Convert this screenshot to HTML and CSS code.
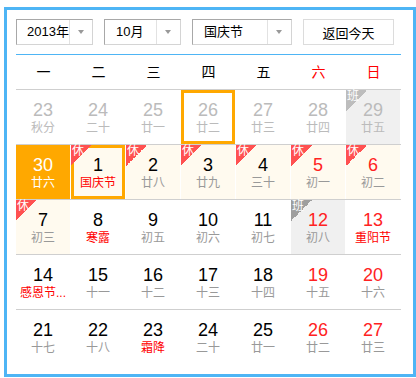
FILE: index.html
```html
<!DOCTYPE html>
<html lang="zh-CN">
<head>
  <meta charset="UTF-8">
  <title>万年历</title>
  <link rel="stylesheet" href="styles.css">
</head>
<body>
  <div class="calendar">
    <div class="toolbar">
      <div class="select year-select"><span class="value">2013年</span><span class="arrow"></span></div>
      <div class="select month-select"><span class="value">10月</span><span class="arrow"></span></div>
      <div class="select holiday-select"><span class="value">国庆节</span><span class="arrow"></span></div>
      <button class="today-btn">返回今天</button>
    </div>

    <div class="weekdays">
      <div>一</div><div>二</div><div>三</div><div>四</div><div>五</div>
      <div class="weekend">六</div><div class="weekend">日</div>
    </div>

    <div class="week">
      <div class="day other"><div class="num">23</div><div class="lunar">秋分</div></div>
      <div class="day other"><div class="num">24</div><div class="lunar">二十</div></div>
      <div class="day other"><div class="num">25</div><div class="lunar">廿一</div></div>
      <div class="day other selected"><div class="num">26</div><div class="lunar">廿二</div></div>
      <div class="day other"><div class="num">27</div><div class="lunar">廿三</div></div>
      <div class="day other"><div class="num">28</div><div class="lunar">廿四</div></div>
      <div class="day other workday"><span class="badge badge-work light">班</span><div class="num">29</div><div class="lunar">廿五</div></div>
    </div>

    <div class="week">
      <div class="day today"><div class="num">30</div><div class="lunar">廿六</div></div>
      <div class="day rest selected"><span class="badge">休</span><div class="num">1</div><div class="lunar fest">国庆节</div></div>
      <div class="day rest"><span class="badge">休</span><div class="num">2</div><div class="lunar">廿八</div></div>
      <div class="day rest"><span class="badge">休</span><div class="num">3</div><div class="lunar">廿九</div></div>
      <div class="day rest"><span class="badge">休</span><div class="num">4</div><div class="lunar">三十</div></div>
      <div class="day rest weekend"><span class="badge">休</span><div class="num">5</div><div class="lunar">初一</div></div>
      <div class="day rest weekend"><span class="badge">休</span><div class="num">6</div><div class="lunar">初二</div></div>
    </div>

    <div class="week">
      <div class="day rest"><span class="badge">休</span><div class="num">7</div><div class="lunar">初三</div></div>
      <div class="day"><div class="num">8</div><div class="lunar fest">寒露</div></div>
      <div class="day"><div class="num">9</div><div class="lunar">初五</div></div>
      <div class="day"><div class="num">10</div><div class="lunar">初六</div></div>
      <div class="day"><div class="num">11</div><div class="lunar">初七</div></div>
      <div class="day weekend workday"><span class="badge badge-work">班</span><div class="num">12</div><div class="lunar">初八</div></div>
      <div class="day weekend"><div class="num">13</div><div class="lunar fest">重阳节</div></div>
    </div>

    <div class="week">
      <div class="day"><div class="num">14</div><div class="lunar fest">感恩节...</div></div>
      <div class="day"><div class="num">15</div><div class="lunar">十一</div></div>
      <div class="day"><div class="num">16</div><div class="lunar">十二</div></div>
      <div class="day"><div class="num">17</div><div class="lunar">十三</div></div>
      <div class="day"><div class="num">18</div><div class="lunar">十四</div></div>
      <div class="day weekend"><div class="num">19</div><div class="lunar">十五</div></div>
      <div class="day weekend"><div class="num">20</div><div class="lunar">十六</div></div>
    </div>

    <div class="week">
      <div class="day"><div class="num">21</div><div class="lunar">十七</div></div>
      <div class="day"><div class="num">22</div><div class="lunar">十八</div></div>
      <div class="day"><div class="num">23</div><div class="lunar fest">霜降</div></div>
      <div class="day"><div class="num">24</div><div class="lunar">二十</div></div>
      <div class="day"><div class="num">25</div><div class="lunar">廿一</div></div>
      <div class="day weekend"><div class="num">26</div><div class="lunar">廿二</div></div>
      <div class="day weekend"><div class="num">27</div><div class="lunar">廿三</div></div>
    </div>
  </div>
</body>
</html>
```

FILE: styles.css
```css
body {
  margin: 0;
  background: #fff;
  font-family: "Liberation Sans", "Noto Sans CJK SC", sans-serif;
  color: #000;
}

.calendar {
  width: 385px;
  margin: 7px 0 0 4px;
  padding: 9px 12px 10px 9px;
  border: 3px solid #4eb5f5;
}

/* toolbar */
.toolbar {
  display: flex;
  gap: 11px;
  height: 26px;
  margin-bottom: 9px;
  font-size: 13px;
}

.select {
  display: flex;
  box-sizing: border-box;
  height: 26px;
  border: 1px solid #d4d4d4;
  border-top-color: #a8a8a8;
  border-left-color: #a8a8a8;
}

.year-select, .month-select {
  width: 77px;
}

.holiday-select {
  width: 100px;
}

.select .value {
  flex: 1;
  padding-left: 11px;
  line-height: 24px;
  white-space: nowrap;
}

.year-select .value {
  padding-left: 10px;
}

.select .arrow {
  position: relative;
  width: 23px;
  border-left: 1px solid #e2e2e2;
}

.select .arrow::after {
  content: "";
  position: absolute;
  left: 8px;
  top: 10px;
  border-left: 3.5px solid transparent;
  border-right: 3.5px solid transparent;
  border-top: 4px solid #999;
}

.today-btn {
  box-sizing: border-box;
  width: 91px;
  height: 26px;
  padding: 0;
  background: #fff;
  border: 1px solid #dcdcdc;
  font-family: inherit;
  font-size: 13px;
  color: #000;
}

/* weekday header */
.weekdays {
  display: grid;
  grid-template-columns: repeat(7, 55px);
  border-top: 1px solid #4eb5f5;
  border-bottom: 1px solid #cfcfcf;
  height: 34px;
  line-height: 34px;
  font-size: 14px;
  text-align: center;
}

.weekdays .weekend {
  color: #f00;
}

/* day grid */
.week {
  display: grid;
  grid-template-columns: repeat(7, 55px);
  border-bottom: 1px solid #cfcfcf;
}

.week:last-child {
  border-bottom: none;
}

.day {
  position: relative;
  height: 54px;
  margin-right: 1px;
  padding-top: 9px;
  box-sizing: border-box;
  text-align: center;
}

.num {
  font-size: 18px;
  line-height: 22px;
}

.lunar {
  font-size: 12px;
  line-height: 14px;
  color: #999;
  white-space: nowrap;
}

.lunar.fest {
  color: #f00;
}

.weekend .num {
  color: #f22;
}

.rest {
  background: #fffaef;
}

.workday {
  background: #f0f0f0;
}

.other .num, .other .lunar {
  color: #bbb;
}

.selected {
  box-shadow: inset 0 0 0 3px #ffa800;
}

.today {
  background: #ffa800;
}

.today .num, .today .lunar {
  color: #fff;
}

.badge {
  position: absolute;
  top: 0;
  left: 0;
  width: 21px;
  height: 21px;
  background: linear-gradient(135deg, #ff5151 50%, transparent 50%);
  color: #fff;
  font-size: 12px;
  line-height: 13px;
  text-indent: 1px;
  text-align: left;
}

.badge-work {
  background: linear-gradient(135deg, #9e9e9e 50%, transparent 50%);
}

.badge-work.light {
  background: linear-gradient(135deg, #bdbdbd 50%, transparent 50%);
}
```
